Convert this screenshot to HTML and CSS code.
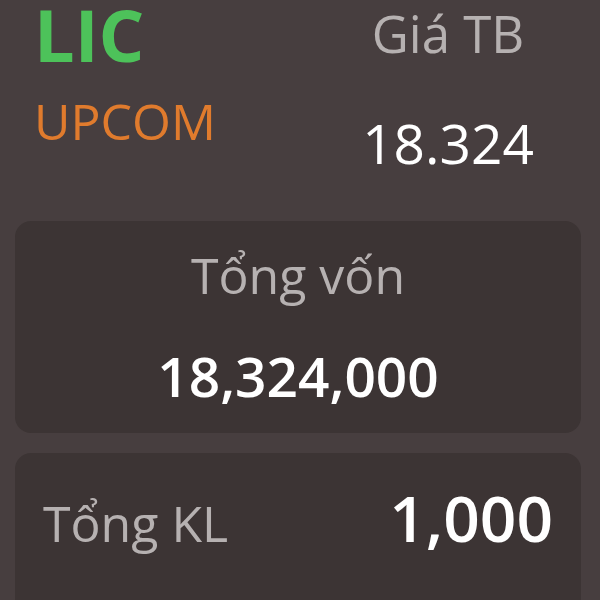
FILE: index.html
```html
<!DOCTYPE html>
<html lang="vi">
<head>
    <meta charset="UTF-8">
    <meta name="viewport" content="width=device-width, initial-scale=1.0">
    <title>LIC</title>
    <link rel="stylesheet" href="styles.css">
</head>
<body>
    <div class="header">
        <div class="symbol">
            <div class="ticker">LIC</div>
            <div class="exchange">UPCOM</div>
        </div>
        <div class="avg">
            <div class="label avg-label">Giá TB</div>
            <div class="avg-value">18.324</div>
        </div>
    </div>

    <div class="card card-center">
        <div class="label">Tổng vốn</div>
        <div class="total-value">18,324,000</div>
    </div>

    <div class="card card-row">
        <div class="label">Tổng KL</div>
        <div class="qty-value">1,000</div>
    </div>
</body>
</html>
```

FILE: styles.css
```css
body {
    font-family: "Open Sans", "Noto Sans", sans-serif;
    margin: 0;
    background-color: #473e3f;
    color: #ffffff;
    height: 600px;
    overflow: hidden;
}
.header {
    display: flex;
    justify-content: space-between;
    padding: 0 27px 0 34px;
    height: 221px;
}
.ticker {
    font-size: 72px;
    font-weight: 700;
    line-height: 0.95;
    color: #4dc25a;
}
.exchange {
    font-size: 50px;
    line-height: 1;
    color: #e07b2d;
    margin-top: 28px;
}
.avg {
    width: 250px;
    text-align: center;
    padding-top: 8px;
}
.label {
    font-size: 50px;
    line-height: 1;
    color: #b6b1b1;
}
.avg-label {
    font-size: 51px;
}
.avg-value {
    font-size: 55px;
    font-weight: 500;
    line-height: 1;
    margin-top: 56px;
}
.card {
    background-color: #3c3434;
    border-radius: 16px;
    margin: 0 19px 20px 15px;
}
.card-center {
    text-align: center;
    padding: 29px 0 30px;
}
.total-value {
    font-size: 55px;
    font-weight: 600;
    line-height: 1;
    margin-top: 48px;
}
.card-row {
    display: flex;
    justify-content: space-between;
    align-items: baseline;
    padding: 33px 28px 120px 28px;
}
.qty-value {
    font-size: 64px;
    font-weight: 600;
    line-height: 1;
}
```
